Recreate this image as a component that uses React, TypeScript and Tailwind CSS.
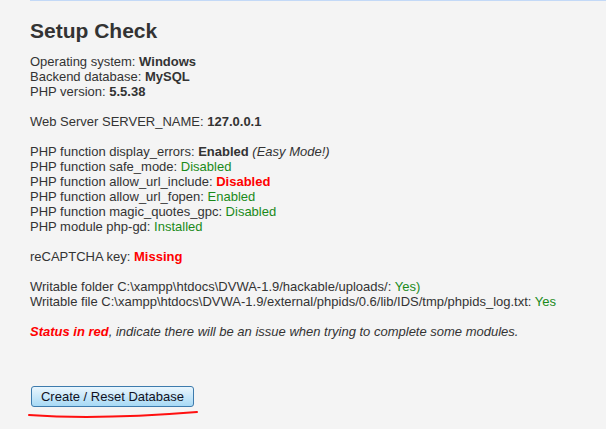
import React from 'react';

const ok = 'text-[#1a8a1a]';
const bad = 'font-bold text-[#ff0000]';

export default function App() {
  return (
    <div className="min-h-[429px] w-[606px] bg-[#f4f4f4] font-['Liberation_Sans',Arial,sans-serif] text-[13px] leading-[15px] text-[#333333]">
      <div className="ml-[30px] border-t border-[#c3d9f7]" />
      <div className="pl-[30px] pt-[16px]">
        <h1 className="mb-[10px] text-[21px] font-bold leading-[27px] text-[#333333]">Setup Check</h1>

        <div className="mb-[15px]">
          <div>Operating system: <b>Windows</b></div>
          <div>Backend database: <b>MySQL</b></div>
          <div>PHP version: <b>5.5.38</b></div>
        </div>

        <div className="mb-[15px]">Web Server SERVER_NAME: <b>127.0.0.1</b></div>

        <div className="mb-[15px]">
          <div>PHP function display_errors: <b>Enabled</b> <i>(Easy Mode!)</i></div>
          <div>PHP function safe_mode: <span className={ok}>Disabled</span></div>
          <div>PHP function allow_url_include: <span className={bad}>Disabled</span></div>
          <div>PHP function allow_url_fopen: <span className={ok}>Enabled</span></div>
          <div>PHP function magic_quotes_gpc: <span className={ok}>Disabled</span></div>
          <div>PHP module php-gd: <span className={ok}>Installed</span></div>
        </div>

        <div className="mb-[15px]">reCAPTCHA key: <span className={bad}>Missing</span></div>

        <div className="mb-[15px]">
          <div>Writable folder C:\xampp\htdocs\DVWA-1.9/hackable/uploads/: <span className={ok}>Yes)</span></div>
          <div>Writable file C:\xampp\htdocs\DVWA-1.9/external/phpids/0.6/lib/IDS/tmp/phpids_log.txt: <span className={ok}>Yes</span></div>
        </div>

        <div className="italic">
          <span className={bad}>Status in red</span>, indicate there will be an issue when trying to complete some modules.
        </div>

        <div className="relative mt-[47px] w-fit">
          <button className="ml-[1px] block h-[21px] w-[163px] rounded-[3px] border border-[#3d7bad] bg-gradient-to-b from-[#eaf6fd] to-[#a7d9f5] text-[13px] leading-[19px] text-[#111122]">
            Create / Reset Database
          </button>
          <svg className="absolute left-[-2px] top-[20px]" width="172" height="16" viewBox="0 0 172 16">
            <path d="M1 9 Q 70 14 169 6" fill="none" stroke="#ff1010" strokeWidth="2" strokeLinecap="round" />
          </svg>
        </div>
      </div>
    </div>
  );
}
